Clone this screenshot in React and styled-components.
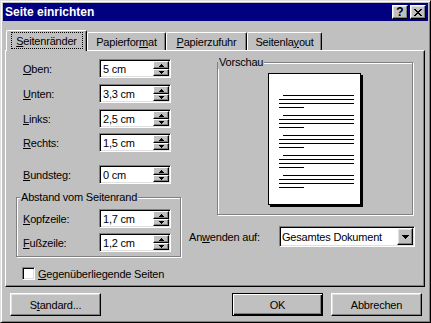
import React from 'react';
import styled, { createGlobalStyle, css } from 'styled-components';

const FACE = '#c0c0c0';

const Global = createGlobalStyle`
  html, body { margin: 0; padding: 0; background: ${FACE}; }
  body {
    font-family: "Liberation Sans", Arial, sans-serif;
    font-size: 11px;
    color: #000;
  }
  * { box-sizing: border-box; }
`;

const raised = css`
  background: ${FACE};
  border: 1px solid;
  border-color: #fff #000 #000 #fff;
  box-shadow: inset -1px -1px 0 #808080, inset 1px 1px 0 #dfdfdf;
`;

const sunken = css`
  background: #fff;
  border: 1px solid;
  border-color: #808080 #fff #fff #808080;
  box-shadow: inset 1px 1px 0 #000, inset -1px -1px 0 #dfdfdf;
`;

const Window = styled.div`
  width: 431px;
  height: 323px;
  background: ${FACE};
  border: 1px solid;
  border-color: #dfdfdf #000 #000 #dfdfdf;
  box-shadow: inset 1px 1px 0 #fff, inset -1px -1px 0 #808080;
  padding: 2px;
  display: flex;
  flex-direction: column;
  letter-spacing: -0.2px;
`;

const Caption = styled.div`
  height: 18px;
  flex: none;
  background: #000080;
  color: #fff;
  display: flex;
  align-items: center;
  padding: 0 2px;
`;

const CaptionTitle = styled.span`
  font-weight: bold;
  font-size: 12px;
  letter-spacing: 0;
`;

const CaptionButtons = styled.div`
  margin-left: auto;
  display: flex;
  gap: 2px;
`;

const CaptionButton = styled.div`
  ${raised};
  width: 16px;
  height: 14px;
  display: flex;
  align-items: center;
  justify-content: center;
  color: #000;
  font-weight: bold;
  font-size: 12px;
  line-height: 12px;
  letter-spacing: 0;
`;

const TabRow = styled.div`
  display: flex;
  align-items: flex-end;
  height: 20px;
  flex: none;
  margin-top: 9px;
  padding-left: 3px;
  position: relative;
  z-index: 1;
`;

const Tab = styled.div`
  width: ${(p) => p.$w}px;
  height: ${(p) => (p.$active ? 21 : 18)}px;
  margin-bottom: ${(p) => (p.$active ? -1 : 0)}px;
  background: ${FACE};
  border-top: 1px solid #fff;
  border-left: 1px solid #fff;
  border-right: 1px solid #000;
  border-radius: 2px 2px 0 0;
  box-shadow: inset -1px 0 0 #808080;
  display: flex;
  align-items: center;
  justify-content: center;
  padding-bottom: ${(p) => (p.$active ? 1 : 0)}px;
`;

const Focus = styled.span`
  width: 72px;
  height: 17px;
  border: 1px dotted #000;
  display: flex;
  align-items: center;
  justify-content: center;
`;

const Panel = styled.div`
  flex: none;
  margin: 0 3px 0 2px;
  height: 237px;
  border: 1px solid;
  border-color: #fff #000 #000 #fff;
  box-shadow: inset -1px -1px 0 #808080;
  padding: 5px 0 0 10px;
  display: flex;
  gap: 8px;
`;

const LeftColumn = styled.div`
  width: 165px;
  display: flex;
  flex-direction: column;
`;

const RightColumn = styled.div`
  width: 226px;
  display: flex;
  flex-direction: column;
`;

const FieldRow = styled.div`
  display: flex;
  align-items: center;
  height: 19px;
  padding-left: ${(p) => p.$indent}px;
  margin-top: ${(p) => p.$mt}px;
`;

const Label = styled.label`
  width: ${(p) => p.$w}px;
  flex: none;
`;

const SpinBox = styled.div`
  ${sunken};
  width: 72px;
  height: 19px;
  padding: 1px;
  display: flex;
`;

const SpinText = styled.span`
  flex: 1;
  padding-left: 2px;
  display: flex;
  align-items: center;
`;

const SpinButtons = styled.div`
  width: 16px;
  display: flex;
  flex-direction: column;
`;

const SpinButton = styled.div`
  height: ${(p) => p.$h}px;
  background: ${FACE};
  border: 1px solid;
  border-color: #fff #000 #000 #fff;
  box-shadow: inset -1px -1px 0 #808080;
  display: flex;
  align-items: center;
  justify-content: center;
`;

const Group = styled.fieldset`
  margin: ${(p) => p.$margin};
  padding: ${(p) => p.$pad};
  width: ${(p) => p.$w}px;
  min-width: 0;
  border: 1px solid #808080;
  box-shadow: inset 1px 1px 0 #fff, 1px 1px 0 #fff;
`;

const GroupLegend = styled.legend`
  padding: 0 1px;
  margin-left: ${(p) => p.$ml}px;
  line-height: 13px;
  background: ${FACE};
`;

const PreviewWrap = styled.div`
  display: flex;
  justify-content: center;
`;

const ApplyRow = styled.div`
  display: flex;
  align-items: center;
  height: 21px;
  margin-top: 11px;
`;

const Select = styled.div`
  ${sunken};
  width: 137px;
  height: 21px;
  padding: 1px;
  display: flex;
  align-items: center;
`;

const SelectText = styled.span`
  flex: 1;
  padding-left: 1px;
`;

const DropButton = styled.div`
  ${raised};
  width: 16px;
  height: 17px;
  display: flex;
  align-items: center;
  justify-content: center;
`;

const CheckRow = styled.div`
  display: flex;
  align-items: center;
  margin-top: 10px;
  padding-left: 6px;
  height: 13px;
`;

const CheckBox = styled.span`
  ${sunken};
  width: 13px;
  height: 13px;
  flex: none;
  margin-right: 3px;
`;

const ButtonRow = styled.div`
  display: flex;
  margin-top: 6px;
  padding: 0 6px 0 7px;
  gap: 8px;
`;

const Spacer = styled.div`
  flex: 1;
`;

const PushButton = styled.button`
  ${raised};
  width: 91px;
  height: 23px;
  padding: 0;
  font: inherit;
  color: #000;
  letter-spacing: -0.2px;
  ${(p) =>
    p.$default &&
    css`
      border-color: #000;
      box-shadow: inset 1px 1px 0 #fff, inset -1px -1px 0 #000,
        inset -2px -2px 0 #808080;
    `}
`;

const Arrow = ({ up, w = 5 }) => {
  const rows = Math.ceil(w / 2);
  const rects = [];
  for (let i = 0; i < rows; i++) {
    const width = w - 2 * i;
    const y = up ? rows - 1 - i : i;
    rects.push(<rect key={i} x={i} y={y} width={width} height={1} fill="#000" />);
  }
  return (
    <svg width={w} height={rows} viewBox={`0 0 ${w} ${rows}`} shapeRendering="crispEdges">
      {rects}
    </svg>
  );
};

const Spin = ({ value }) => (
  <SpinBox>
    <SpinText>{value}</SpinText>
    <SpinButtons>
      <SpinButton $h={8}>
        <Arrow up w={5} />
      </SpinButton>
      <SpinButton $h={7}>
        <Arrow w={5} />
      </SpinButton>
    </SpinButtons>
  </SpinBox>
);

const PagePreview = () => {
  const lines = [];
  for (let p = 0; p < 5; p++) {
    const y0 = 22 + p * 20;
    lines.push({ x1: 15, x2: 86, y: y0 });
    lines.push({ x1: 11, x2: 86, y: y0 + 4 });
    lines.push({ x1: 11, x2: 86, y: y0 + 8 });
    lines.push({ x1: 11, x2: 36, y: y0 + 12 });
  }
  return (
    <svg width="95" height="134" viewBox="0 0 95 134" shapeRendering="crispEdges">
      <rect x="2" y="2" width="93" height="132" fill="#000" />
      <rect x="0" y="0" width="93" height="132" fill="#000" />
      <rect x="1" y="1" width="91" height="130" fill="#fff" />
      {lines.map((l, i) => (
        <rect key={i} x={l.x1} y={l.y} width={l.x2 - l.x1} height="1" fill="#000" />
      ))}
    </svg>
  );
};

const rows = [
  { key: 'O', rest: 'ben:', value: '5 cm', mt: 3 },
  { key: 'U', rest: 'nten:', value: '3,3 cm', mt: 6 },
  { key: 'L', rest: 'inks:', value: '2,5 cm', mt: 6 },
  { key: 'R', rest: 'echts:', value: '1,5 cm', mt: 5 },
  { key: 'B', rest: 'undsteg:', value: '0 cm', mt: 13 },
];

export default function App() {
  return (
    <>
      <Global />
      <Window>
        <Caption>
          <CaptionTitle>Seite einrichten</CaptionTitle>
          <CaptionButtons>
            <CaptionButton>?</CaptionButton>
            <CaptionButton>
              <svg width="8" height="7" viewBox="0 0 8 7" shapeRendering="crispEdges">
                <path
                  d="M0 0h2v1h-2zM6 0h2v1h-2zM1 1h2v1h-2zM5 1h2v1h-2zM2 2h4v1h-4zM3 3h2v1h-2zM2 4h4v1h-4zM1 5h2v1h-2zM5 5h2v1h-2zM0 6h2v1h-2zM6 6h2v1h-2z"
                  fill="#000"
                />
              </svg>
            </CaptionButton>
          </CaptionButtons>
        </Caption>

        <TabRow>
          <Tab $w={81} $active>
            <Focus>
              <span>
                <u>S</u>eitenränder
              </span>
            </Focus>
          </Tab>
          <Tab $w={79}>
            <span>
              Papierfor<u>m</u>at
            </span>
          </Tab>
          <Tab $w={81}>
            <span>
              <u>P</u>apierzufuhr
            </span>
          </Tab>
          <Tab $w={75}>
            <span>
              Seitenla<u>y</u>out
            </span>
          </Tab>
        </TabRow>

        <Panel>
          <LeftColumn>
            {rows.map((r) => (
              <FieldRow key={r.key} $indent={7} $mt={r.mt}>
                <Label $w={76}>
                  <u>{r.key}</u>
                  {r.rest}
                </Label>
                <Spin value={r.value} />
              </FieldRow>
            ))}
            <Group $margin="7px 0 0 0" $pad="5px 0 4px 0" $w={165}>
              <GroupLegend $ml={3}>Abstand vom Seitenrand</GroupLegend>
              <FieldRow $indent={6} $mt={0}>
                <Label $w={76}>
                  <u>K</u>opfzeile:
                </Label>
                <Spin value="1,7 cm" />
              </FieldRow>
              <FieldRow $indent={6} $mt={5}>
                <Label $w={76}>
                  <u>F</u>ußzeile:
                </Label>
                <Spin value="1,2 cm" />
              </FieldRow>
            </Group>
            <CheckRow>
              <CheckBox />
              <span>
                <u>G</u>egenüberliegende Seiten
              </span>
            </CheckRow>
          </LeftColumn>

          <RightColumn>
            <Group $margin="0 0 0 28px" $pad="4px 0 7px 0" $w={196}>
              <GroupLegend $ml={0}>Vorschau</GroupLegend>
              <PreviewWrap>
                <PagePreview />
              </PreviewWrap>
            </Group>
            <ApplyRow>
              <Label $w={90}>
                An<u>w</u>enden auf:
              </Label>
              <Select>
                <SelectText>Gesamtes Dokument</SelectText>
                <DropButton>
                  <Arrow w={7} />
                </DropButton>
              </Select>
            </ApplyRow>
          </RightColumn>
        </Panel>

        <ButtonRow>
          <PushButton>
            S<u>t</u>andard...
          </PushButton>
          <Spacer />
          <PushButton $default>OK</PushButton>
          <PushButton>Abbrechen</PushButton>
        </ButtonRow>
      </Window>
    </>
  );
}
